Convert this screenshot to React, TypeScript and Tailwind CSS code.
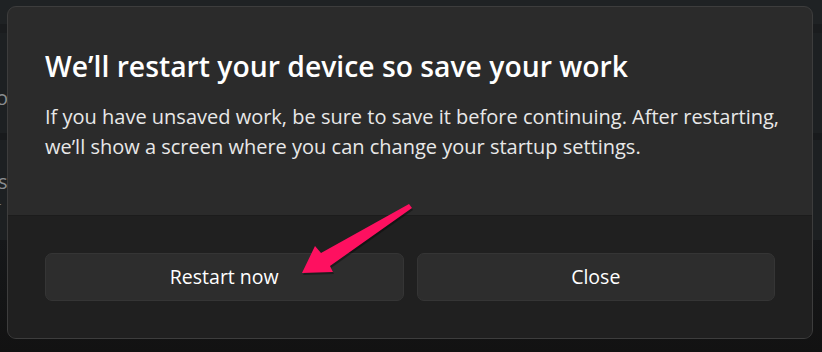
import React from "react";

function Backdrop() {
  return (
    <div className="flex h-[352px] w-[822px] flex-col bg-[#1d2022]">
      <div className="h-[24px] bg-[#1f2224]" />
      <div className="h-[9px] bg-[#1a1c1e]" />
      <div className="flex h-[100px] items-center pt-[30px] text-[20px] text-[#8a8d90]">
        <span className="-ml-[4px]">or</span>
      </div>
      <div className="h-[7px] bg-[#181a1c]" />
      <div className="flex h-[100px] flex-col justify-center pt-[8px] text-[20px] leading-[24px] text-[#8a8d90]">
        <span className="-ml-[2px]">s</span>
        <span className="-ml-[3px] text-[10px]">r</span>
      </div>
      <div className="flex-1 bg-gradient-to-b from-[#16181a] to-[#121212]" />
    </div>
  );
}

function Arrow() {
  return (
    <svg
      className="pointer-events-none absolute left-0 top-0"
      width="822"
      height="352"
      viewBox="0 0 822 352"
    >
      <polygon
        points="302,273 315,246 321,253 409,204 412,208 330,266 333,272"
        fill="rgba(0,0,0,0.35)"
        transform="translate(1,2)"
      />
      <polygon
        points="302,273 315,246 321,253 409,204 412,208 330,266 333,272"
        fill="#fe1060"
      />
    </svg>
  );
}

export default function App() {
  return (
    <div
      className="relative h-[352px] w-[822px] overflow-hidden"
      style={{ fontFamily: '"Open Sans", "Noto Sans", sans-serif' }}
    >
      <Backdrop />
      <div className="absolute left-[7px] top-[6px] flex h-[333px] w-[806px] flex-col overflow-hidden rounded-[9px] border border-[#3d3d3d] bg-[#2b2b2b]">
        <div className="flex h-[208px] flex-col pl-[37px] pr-[20px] pt-[41px]">
          <h1 className="whitespace-nowrap text-[28.3px] font-semibold leading-[36px] text-white">
            We’ll restart your device so save your work
          </h1>
          <p className="mt-[18px] whitespace-nowrap text-[20px] leading-[30px] text-[#e8e8e8]">
            If you have unsaved work, be sure to save it before continuing. After restarting,
            <br />
            we’ll show a screen where you can change your startup settings.
          </p>
        </div>
        <div className="flex flex-1 items-start gap-[13px] border-t border-[#1c1c1c] bg-[#202020] px-[37px] pt-[37px]">
          <button className="flex h-[48px] flex-1 items-center justify-center rounded-[7px] border border-[#353535] bg-[#2d2d2d] text-[19.5px] text-white">
            Restart now
          </button>
          <button className="flex h-[48px] flex-1 items-center justify-center rounded-[7px] border border-[#353535] bg-[#2d2d2d] text-[19.5px] text-white">
            Close
          </button>
        </div>
      </div>
      <Arrow />
    </div>
  );
}
